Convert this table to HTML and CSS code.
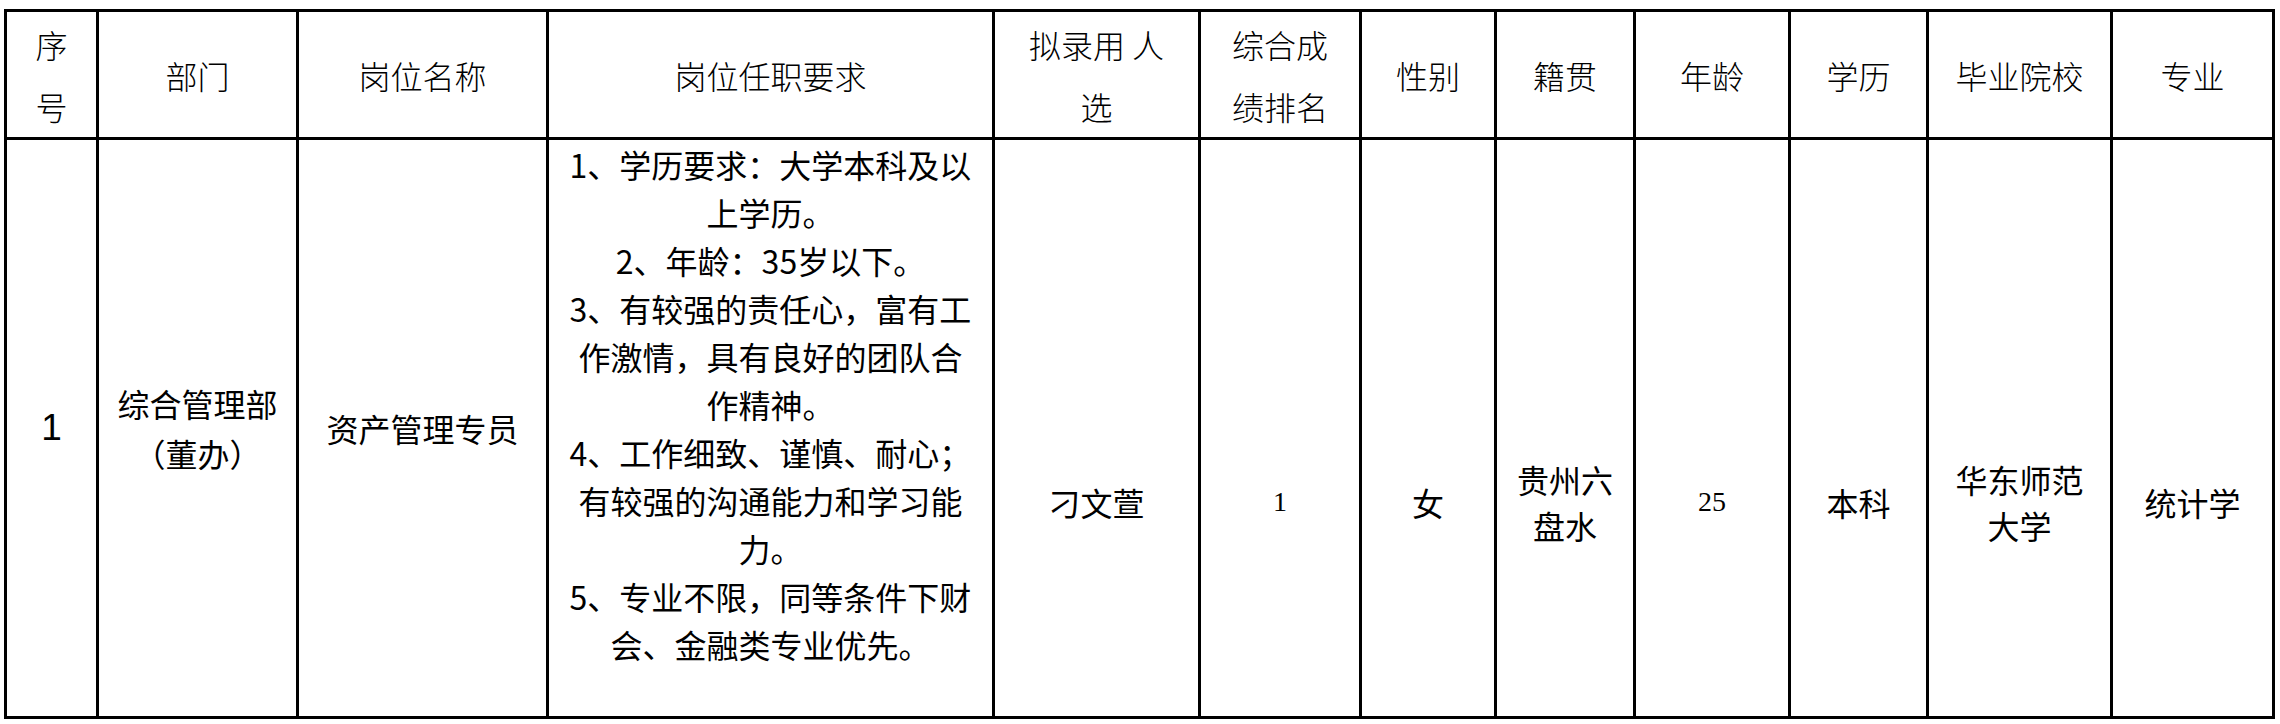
FILE: index.html
```html
<!DOCTYPE html>
<html lang="zh-CN">
<head>
<meta charset="utf-8">
<title>拟录用人选公示</title>
<link rel="stylesheet" href="styles.css">
</head>
<body>
<table class="sheet">
  <colgroup>
    <col class="c-no">
    <col class="c-dept">
    <col class="c-post">
    <col class="c-req">
    <col class="c-name">
    <col class="c-rank">
    <col class="c-sex">
    <col class="c-home">
    <col class="c-age">
    <col class="c-edu">
    <col class="c-school">
    <col class="c-major">
  </colgroup>
  <thead>
    <tr>
      <th class="first">序号</th>
      <th>部门</th>
      <th>岗位名称</th>
      <th>岗位任职要求</th>
      <th class="wide">拟录用 人选</th>
      <th class="wide">综合成绩排名</th>
      <th>性别</th>
      <th>籍贯</th>
      <th>年龄</th>
      <th>学历</th>
      <th>毕业院校</th>
      <th>专业</th>
    </tr>
  </thead>
  <tbody>
    <tr>
      <td class="first seq">1</td>
      <td class="dept">综合管理部（董办）</td>
      <td>资产管理专员</td>
      <td class="req">
        <p>1、学历要求：大学本科及以上学历。</p>
        <p>2、年龄：35岁以下。</p>
        <p>3、有较强的责任心，富有工作激情，具有良好的团队合作精神。</p>
        <p>4、工作细致、谨慎、耐心；有较强的沟通能力和学习能力。</p>
        <p>5、专业不限，同等条件下财会、金融类专业优先。</p>
        <p>&nbsp;</p>
      </td>
      <td class="low wide">刁文萱</td>
      <td class="low wide num">1</td>
      <td class="low">女</td>
      <td class="low">贵州六盘水</td>
      <td class="low num">25</td>
      <td class="low">本科</td>
      <td class="low">华东师范大学</td>
      <td class="low">统计学</td>
    </tr>
  </tbody>
</table>
</body>
</html>
```

FILE: styles.css
```css
html, body {
  margin: 0;
  padding: 0;
  background: #ffffff;
}

.sheet {
  margin: 9px 0 0 4px;
  width: 2271px;
  table-layout: fixed;
  border-collapse: separate;
  border-spacing: 0;
  border-top: 3px solid #000;
  border-left: 3px solid #000;
  color: #000;
  font-family: "Noto Sans CJK SC", "Noto Sans", sans-serif;
}

.c-no { width: 92px; }
.c-dept { width: 200px; }
.c-post { width: 250px; }
.c-req { width: 446px; }
.c-name { width: 206px; }
.c-rank { width: 161px; }
.c-sex { width: 135px; }
.c-home { width: 139px; }
.c-age { width: 155px; }
.c-edu { width: 138px; }
.c-school { width: 184px; }
.c-major { width: 162px; }

.sheet th,
.sheet td {
  box-sizing: border-box;
  border-right: 3px solid #000;
  border-bottom: 3px solid #000;
  padding: 0 16px;
  text-align: center;
  vertical-align: middle;
  font-size: 32px;
  font-weight: 400;
}

.sheet th {
  height: 128px;
  line-height: 62px;
  font-weight: 300;
}

.sheet td {
  height: 579px;
  line-height: 48px;
}

.sheet .wide {
  padding-left: 24px;
  padding-right: 24px;
}

.sheet .seq {
  font-family: "Liberation Sans", Arial, sans-serif;
  font-size: 37px;
}

.sheet .dept {
  line-height: 50px;
}

.sheet .req p {
  margin: 0;
}

.sheet .low {
  padding-top: 148px;
  line-height: 46px;
}

.sheet .num {
  font-family: "Liberation Serif", "Times New Roman", serif;
  font-size: 28px;
}
```
